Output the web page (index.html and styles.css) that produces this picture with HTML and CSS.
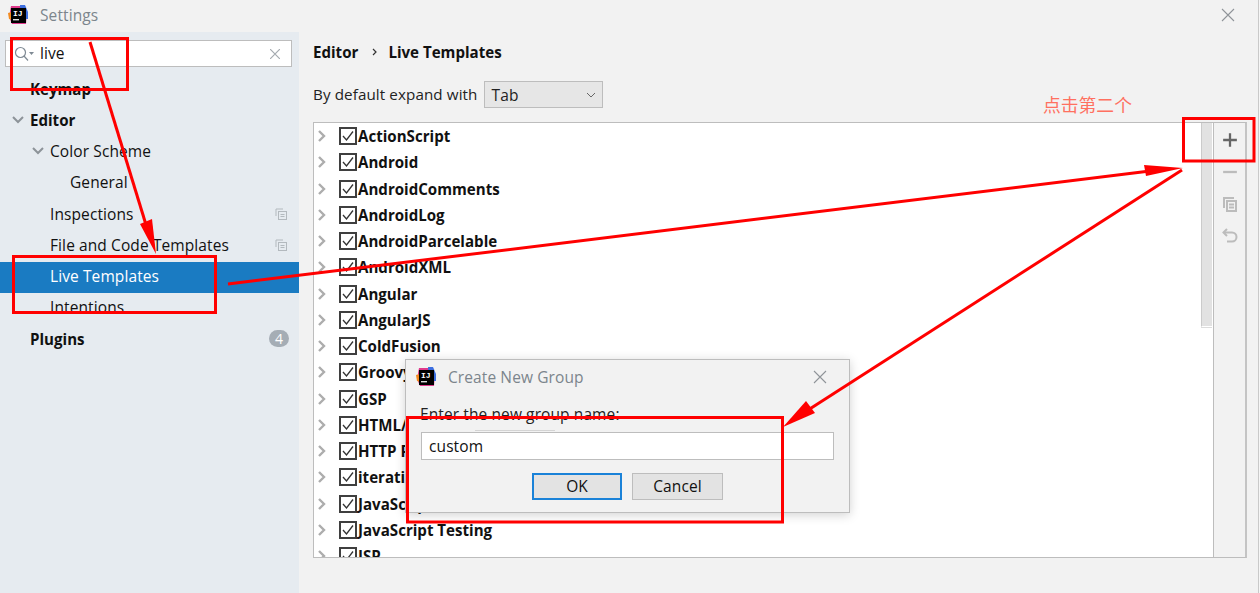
FILE: index.html
```html
<!DOCTYPE html>
<html lang="en">
<head>
<meta charset="utf-8">
<title>Settings</title>
<link rel="stylesheet" href="styles.css">
</head>
<body>
<div class="window">
  <header class="titlebar">
    <svg class="logo" viewBox="0 0 20 20"><path d="M3 1h13l3 6-1 12H4L1 12z" fill="#e0398c"/><path d="M12 0h5l3 7v7h-7z" fill="#3d6fe0"/><path d="M0 8l4-1v8l-3-1z" fill="#f28a1e"/><rect x="3" y="3" width="15" height="15" fill="#000"/><rect x="5" y="14" width="6" height="1.4" fill="#ddd"/><text x="5" y="11" class="logo-text">IJ</text></svg>
    <span class="title">Settings</span>
    <svg class="close" viewBox="0 0 14 14"><path d="M1 1l12 12M13 1L1 13"/></svg>
  </header>
  <div class="content">
    <aside class="sidebar">
      <div class="search">
        <svg class="search-icon" viewBox="0 0 20 16"><circle cx="6.5" cy="6.5" r="5"/><path d="M10 10l4 4.5"/><path class="caret" d="M15 6h5l-2.5 3z"/></svg>
        <span class="search-text">live</span>
        <svg class="search-clear" viewBox="0 0 10 10"><path d="M0 0l10 10M10 0L0 10"/></svg>
      </div>
      <nav class="nav">
        <div class="nav-item lvl0 strong">Keymap</div>
        <div class="nav-item lvl0 strong"><svg class="chev" viewBox="0 0 12 8"><path d="M1 1l5 5 5-5"/></svg>Editor</div>
        <div class="nav-item lvl1"><svg class="chev" viewBox="0 0 12 8"><path d="M1 1l5 5 5-5"/></svg>Color Scheme</div>
        <div class="nav-item lvl2">General</div>
        <div class="nav-item lvl1">Inspections<svg class="copy" viewBox="0 0 12 12"><path d="M1 8V1h7" /><rect x="3.500" y="3.500" width="8" height="8"/><path d="M5.500 6.500h4M5.500 8.500h4"/></svg></div>
        <div class="nav-item lvl1">File and Code Templates<svg class="copy" viewBox="0 0 12 12"><path d="M1 8V1h7" /><rect x="3.500" y="3.500" width="8" height="8"/><path d="M5.500 6.500h4M5.500 8.500h4"/></svg></div>
        <div class="nav-item lvl1 selected">Live Templates</div>
        <div class="nav-item lvl1">Intentions</div>
        <div class="nav-item lvl0 strong">Plugins<span class="badge">4</span></div>
      </nav>
    </aside>
    <main class="main">
      <div class="crumbs"><span>Editor</span><svg class="crumb-sep" viewBox="0 0 5 8"><path d="M1 1l3 3-3 3"/></svg><span>Live Templates</span></div>
      <div class="expand">
        <span class="expand-label">By default expand with</span>
        <div class="select"><span>Tab</span><svg viewBox="0 0 10 6"><path d="M1 1l4 4 4-4"/></svg></div>
      </div>
      <div class="panel">
        <div class="tree">
          <div class="row"><svg class="arrow" viewBox="0 0 8 12"><path d="M1 1l5 5-5 5"/></svg><span class="check"><svg viewBox="0 0 12 12"><path d="M1 6l3.500 4L11 1.500"/></svg></span>ActionScript</div>
          <div class="row"><svg class="arrow" viewBox="0 0 8 12"><path d="M1 1l5 5-5 5"/></svg><span class="check"><svg viewBox="0 0 12 12"><path d="M1 6l3.500 4L11 1.500"/></svg></span>Android</div>
          <div class="row"><svg class="arrow" viewBox="0 0 8 12"><path d="M1 1l5 5-5 5"/></svg><span class="check"><svg viewBox="0 0 12 12"><path d="M1 6l3.500 4L11 1.500"/></svg></span>AndroidComments</div>
          <div class="row"><svg class="arrow" viewBox="0 0 8 12"><path d="M1 1l5 5-5 5"/></svg><span class="check"><svg viewBox="0 0 12 12"><path d="M1 6l3.500 4L11 1.500"/></svg></span>AndroidLog</div>
          <div class="row"><svg class="arrow" viewBox="0 0 8 12"><path d="M1 1l5 5-5 5"/></svg><span class="check"><svg viewBox="0 0 12 12"><path d="M1 6l3.500 4L11 1.500"/></svg></span>AndroidParcelable</div>
          <div class="row"><svg class="arrow" viewBox="0 0 8 12"><path d="M1 1l5 5-5 5"/></svg><span class="check"><svg viewBox="0 0 12 12"><path d="M1 6l3.500 4L11 1.500"/></svg></span>AndroidXML</div>
          <div class="row"><svg class="arrow" viewBox="0 0 8 12"><path d="M1 1l5 5-5 5"/></svg><span class="check"><svg viewBox="0 0 12 12"><path d="M1 6l3.500 4L11 1.500"/></svg></span>Angular</div>
          <div class="row"><svg class="arrow" viewBox="0 0 8 12"><path d="M1 1l5 5-5 5"/></svg><span class="check"><svg viewBox="0 0 12 12"><path d="M1 6l3.500 4L11 1.500"/></svg></span>AngularJS</div>
          <div class="row"><svg class="arrow" viewBox="0 0 8 12"><path d="M1 1l5 5-5 5"/></svg><span class="check"><svg viewBox="0 0 12 12"><path d="M1 6l3.500 4L11 1.500"/></svg></span>ColdFusion</div>
          <div class="row"><svg class="arrow" viewBox="0 0 8 12"><path d="M1 1l5 5-5 5"/></svg><span class="check"><svg viewBox="0 0 12 12"><path d="M1 6l3.500 4L11 1.500"/></svg></span>Groovy</div>
          <div class="row"><svg class="arrow" viewBox="0 0 8 12"><path d="M1 1l5 5-5 5"/></svg><span class="check"><svg viewBox="0 0 12 12"><path d="M1 6l3.500 4L11 1.500"/></svg></span>GSP</div>
          <div class="row"><svg class="arrow" viewBox="0 0 8 12"><path d="M1 1l5 5-5 5"/></svg><span class="check"><svg viewBox="0 0 12 12"><path d="M1 6l3.500 4L11 1.500"/></svg></span>HTML/XSLT</div>
          <div class="row"><svg class="arrow" viewBox="0 0 8 12"><path d="M1 1l5 5-5 5"/></svg><span class="check"><svg viewBox="0 0 12 12"><path d="M1 6l3.500 4L11 1.500"/></svg></span>HTTP Request</div>
          <div class="row"><svg class="arrow" viewBox="0 0 8 12"><path d="M1 1l5 5-5 5"/></svg><span class="check"><svg viewBox="0 0 12 12"><path d="M1 6l3.500 4L11 1.500"/></svg></span>iterations</div>
          <div class="row"><svg class="arrow" viewBox="0 0 8 12"><path d="M1 1l5 5-5 5"/></svg><span class="check"><svg viewBox="0 0 12 12"><path d="M1 6l3.500 4L11 1.500"/></svg></span>JavaScript</div>
          <div class="row"><svg class="arrow" viewBox="0 0 8 12"><path d="M1 1l5 5-5 5"/></svg><span class="check"><svg viewBox="0 0 12 12"><path d="M1 6l3.500 4L11 1.500"/></svg></span>JavaScript Testing</div>
          <div class="row"><svg class="arrow" viewBox="0 0 8 12"><path d="M1 1l5 5-5 5"/></svg><span class="check"><svg viewBox="0 0 12 12"><path d="M1 6l3.500 4L11 1.500"/></svg></span>JSP</div>
        </div>
        <div class="scrollbar"><div class="thumb"></div></div>
        <div class="toolbar">
          <svg class="tool tool-add" viewBox="0 0 14 14"><path d="M7 1v12M1 7h12"/></svg>
          <svg class="tool" viewBox="0 0 14 14"><path d="M1 7h12"/></svg>
          <svg class="tool" viewBox="0 0 16 16"><path d="M2 12V2h10"/><rect x="5" y="5" width="9" height="10"/><path d="M7 8.500h5M7 11.500h5"/></svg>
          <svg class="tool" viewBox="0 0 16 16"><path d="M5 1L1.500 4.500 5 8"/><path d="M2 4.500h8a4.300 4.300 0 0 1 0 9H5"/></svg>
        </div>
      </div>
    </main>
  </div>
</div>

<div class="edge"></div>

<section class="dialog">
  <div class="dialog-title">
    <svg class="logo" viewBox="0 0 20 20"><path d="M3 1h13l3 6-1 12H4L1 12z" fill="#e0398c"/><path d="M12 0h5l3 7v7h-7z" fill="#3d6fe0"/><path d="M0 8l4-1v8l-3-1z" fill="#f28a1e"/><rect x="3" y="3" width="15" height="15" fill="#000"/><rect x="5" y="14" width="6" height="1.4" fill="#ddd"/><text x="5" y="11" class="logo-text">IJ</text></svg>
    <span class="title">Create New Group</span>
    <svg class="close" viewBox="0 0 14 14"><path d="M1 1l12 12M13 1L1 13"/></svg>
  </div>
  <div class="dialog-body">
    <div class="dialog-label">Enter the new group name:</div>
    <div class="dialog-input">custom</div>
    <div class="dialog-actions">
      <div class="btn btn-default">OK</div>
      <div class="btn">Cancel</div>
    </div>
  </div>
</section>

<div class="note">点击第二个</div>

<svg class="annotations" viewBox="0 0 1260 593">
  <g class="boxes">
    <rect x="11.500" y="38.500" width="116" height="51"/>
    <rect x="13.500" y="256.500" width="202" height="56"/>
    <rect x="1183.500" y="118.500" width="70.500" height="42.500"/>
    <rect x="407.500" y="417.500" width="375" height="104.500"/>
  </g>
  <g class="lines">
    <path d="M90 42L147 228"/>
    <path d="M228 284L1150 171"/>
    <path d="M1182 170L805 412"/>
  </g>
  <g class="heads">
    <path d="M140 224L152 219L156 254z"/>
    <path d="M1144 165L1183 168L1146 176z"/>
    <path d="M783 427L806 401L815 413z"/>
  </g>
</svg>
</body>
</html>
```
FILE: styles.css
```css
* { box-sizing: border-box; }
html, body { margin: 0; height: 100%; overflow: hidden; }
body {
  position: relative;
  width: 1260px;
  height: 593px;
  background: #f2f2f2;
  font-family: "Open Sans", "Noto Sans", sans-serif;
  font-size: 15.5px;
  letter-spacing: 0.1px;
  color: #111;
}
.window { display: flex; flex-direction: column; height: 593px; }
.titlebar { display: flex; align-items: center; height: 32px; padding: 0 25px 2px 8px; background: #f2f2f2; flex: none; }
.logo { width: 20px; height: 20px; flex: none; }
.logo-text { font: 700 8px "Liberation Mono", monospace; fill: #fff; letter-spacing: 0; }
.title { margin-left: 12px; color: #7c858c; flex: 1; }
.close { width: 14px; height: 14px; flex: none; fill: none; stroke: #8f9499; stroke-width: 1.1; }
.content { display: flex; flex: 1; min-height: 0; }

.sidebar { width: 299px; flex: none; background: #e6ebf0; padding-top: 8px; overflow: hidden; }
.search { display: flex; align-items: center; height: 27px; margin: 0 7px 0 5px; padding: 0 11px 2px 8px; background: #fff; border: 1px solid #bdbdbd; }
.search-icon { width: 20px; height: 16px; flex: none; fill: none; stroke: #7f8a94; stroke-width: 1.2; margin-top: 2px; }
.search-icon .caret { fill: #7f8a94; stroke: none; }
.search-text { margin-left: 6px; flex: 1; color: #111; }
.search-clear { width: 10px; height: 10px; flex: none; fill: none; stroke: #a5abb0; stroke-width: 1.2; margin-top: 2px; }
.nav { margin-top: 7px; }
.nav-item { display: flex; align-items: center; height: 31.25px; padding-right: 12px; padding-bottom: 2px; white-space: nowrap; color: #111; }
.lvl0 { padding-left: 30px; }
.lvl1 { padding-left: 50px; }
.lvl2 { padding-left: 70px; }
.strong { font-weight: 700; font-size: 15.1px; letter-spacing: 0; }
.chev { width: 12px; height: 8px; margin-left: -18px; margin-right: 6px; fill: none; stroke: #8d9399; stroke-width: 2; flex: none; }
.copy { width: 12px; height: 12px; margin-left: auto; fill: none; stroke: #b3b9be; stroke-width: 1; flex: none; }
.selected { background: #1a7bc2; color: #fff; }
.badge { margin-left: auto; width: 20px; height: 17px; border-radius: 9px; background: #a5adb5; color: #fff; font-size: 14px; font-weight: 400; text-align: center; line-height: 17px; margin-right: -2px; }

.main { flex: 1; padding: 0 14px; min-width: 0; }
.crumbs { display: flex; align-items: center; height: 24px; margin-top: 8px; font-weight: 700; font-size: 15.1px; letter-spacing: 0; color: #111; }
.crumb-sep { width: 5px; height: 8px; margin: 0 11px 0 14px; fill: none; stroke: #333; stroke-width: 1.2; }
.expand { display: flex; align-items: center; gap: 6px; margin-top: 17px; height: 27px; padding-bottom: 1px; color: #222; }
.expand-label { font-size: 15.2px; }
.select { display: flex; align-items: center; justify-content: space-between; width: 119px; height: 27px; padding: 0 6px 0 7px; border: 1px solid #bdbdbd; background: #e6e6e6; margin-top: 1px; }
.select svg { width: 10px; height: 6px; fill: none; stroke: #666; stroke-width: 1; }
.panel { display: flex; height: 436px; margin-top: 14px; border: 1px solid #bdbdbd; border-right: 2px solid #c4c4c4; background: #fff; width: 934px; }
.tree { flex: 1; overflow: hidden; min-width: 0; }
.row { display: flex; align-items: center; height: 26.25px; padding-left: 4px; font-weight: 700; font-size: 15.1px; letter-spacing: 0; white-space: nowrap; color: #111; }
.arrow { width: 8px; height: 12px; flex: none; fill: none; stroke: #adadad; stroke-width: 2.4; }
.check { display: flex; align-items: center; justify-content: center; width: 18px; height: 18px; margin-left: 13px; margin-right: 1px; border: 2px solid #3f3f3f; background: #fff; flex: none; }
.check svg { width: 12px; height: 12px; fill: none; stroke: #333; stroke-width: 1.3; }
.scrollbar { width: 12px; background: #fff; flex: none; }
.thumb { height: 204px; width: 11px; background: #e2e2e2; border-left: 1px solid #cbcbcb; border-bottom: 1px solid #fff; box-shadow: 0 1px 0 #dcdcdc; }
.toolbar { width: 32px; flex: none; background: #f2f2f2; border-left: 1px solid #bdbdbd; display: flex; flex-direction: column; align-items: center; padding-top: 9px; gap: 16px; }
.tool { width: 16px; height: 16px; fill: none; stroke: #bcbcbc; stroke-width: 2; }
.tool-add { stroke: #666; }

.edge { position: absolute; left: 1258px; top: 0; width: 2px; height: 593px; background: #c9c9c9; border-right: 1px solid #f6f6f6; }

.dialog { position: absolute; left: 405px; top: 359px; width: 445px; height: 154px; background: #f2f2f2; border: 1px solid #bdbdbd; box-shadow: 0 2px 10px rgba(0,0,0,.18); display: flex; flex-direction: column; }
.dialog-title { display: flex; align-items: center; height: 34px; padding: 0 22px 0 10px; flex: none; }
.dialog-title .title { margin-left: 12px; }
.dialog-body { padding: 0 15px; }
.dialog-label { margin: 10px 0 0 -1px; height: 20px; line-height: 20px; color: #222; }
.dialog-input { position: relative; height: 28px; margin-top: 8px; padding: 0 7px; line-height: 26px; background: #fff; border: 1px solid #bdbdbd; color: #111; }
.dialog-input::before { content: ""; position: absolute; left: 53px; top: -3px; width: 80px; height: 1px; background: #d4d4d4; }
.dialog-actions { display: flex; justify-content: center; gap: 10px; margin-top: 13px; }
.btn { width: 91px; height: 27px; text-align: center; line-height: 25px; background: #e3e3e3; border: 1px solid #bdbdbd; color: #111; }
.btn-default { border: 2px solid #1a82d8; line-height: 23px; width: 90px; }

.note { position: absolute; left: 1043px; top: 92px; font-family: "Noto Sans CJK SC", serif; font-size: 17.8px; line-height: 24px; letter-spacing: 0; color: #ff7060; }
.annotations { position: absolute; left: 0; top: 0; width: 1260px; height: 593px; pointer-events: none; }
.boxes rect { fill: none; stroke: #f00; stroke-width: 3; }
.lines path { fill: none; stroke: #f00; stroke-width: 3; }
.heads path { fill: #f00; }
```
